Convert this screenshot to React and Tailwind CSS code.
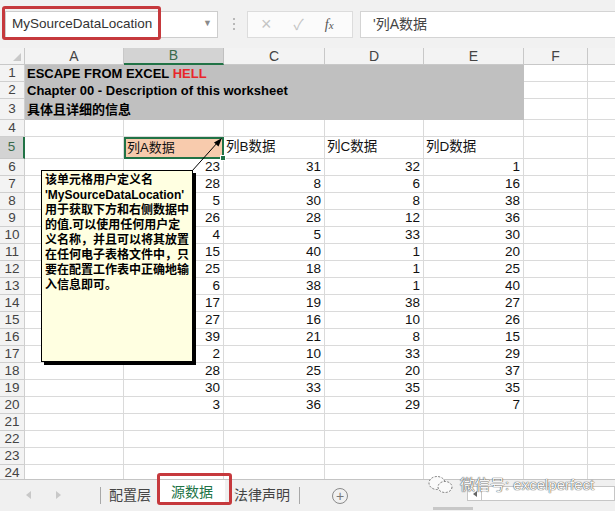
import React from "react";

const FONT = { fontFamily: '"Liberation Sans", "Noto Sans CJK SC", Arial, sans-serif' };

const data = {
  6: [23, 31, 32, 1],
  7: [28, 8, 6, 16],
  8: [5, 30, 8, 38],
  9: [26, 28, 12, 36],
  10: [4, 5, 33, 30],
  11: [15, 40, 1, 20],
  12: [25, 18, 1, 25],
  13: [6, 38, 1, 40],
  14: [17, 19, 38, 27],
  15: [27, 16, 10, 26],
  16: [39, 21, 8, 15],
  17: [2, 10, 33, 29],
  18: [28, 25, 20, 37],
  19: [30, 33, 35, 35],
  20: [3, 36, 29, 7],
};

const widths = ["w-[99px]", "w-[100px]", "w-[101px]", "w-[99px]", "w-[100px]", "w-[64px]"];

const RowHead = ({ n }) => (
  <div
    className={
      n === 5
        ? "w-[25px] shrink-0 flex items-center justify-center bg-[#d3d3d3] border-r-2 border-r-[#217346] border-b border-b-[#c8c8c8] text-[13.5px] text-[#3a6a4c]"
        : "w-[25px] shrink-0 flex items-center justify-center bg-[#f3f3f3] border-r border-b border-[#cfcfcf] text-[13.5px] text-[#444]"
    }
  >
    {n}
  </div>
);

const Cell = ({ w, children, right }) => (
  <div
    className={`${w} shrink-0 flex items-center border-r border-b border-[#dadada] text-[13.5px] text-[#111] whitespace-nowrap ${
      right ? "justify-end pr-[3px]" : "pl-[2px]"
    }`}
  >
    {children}
  </div>
);

const Row = ({ n }) => {
  const h = n === 3 ? "h-[21px]" : n === 5 ? "h-[22px]" : "h-[17px]";
  if (n <= 3) {
    const titles = {
      1: (
        <span>
          ESCAPE FROM EXCEL <span className="text-[#e8262a]">HELL</span>
        </span>
      ),
      2: "Chapter 00 - Description of this worksheet",
      3: "具体且详细的信息",
    };
    return (
      <div className={`flex ${h}`}>
        <RowHead n={n} />
        <div className="w-[499px] shrink-0 flex items-center pl-[2px] bg-[#c0c0c0] text-[13px] font-bold text-black whitespace-pre">
          {titles[n]}
        </div>
        <Cell w="w-[64px]" />
        <div className="flex-1 border-b border-[#dadada]" />
      </div>
    );
  }
  if (n === 5) {
    return (
      <div className={`flex ${h}`}>
        <RowHead n={n} />
        <Cell w={widths[0]} />
        <div className="w-[100px] shrink-0 relative bg-[#f8cbad] border-2 border-[#217346] flex items-center pl-[1px] text-[13px] text-[#111]">
          列A数据
          <div className="absolute right-[-4px] bottom-[-4px] w-[6px] h-[6px] bg-[#217346] border border-white" />
        </div>
        <Cell w={widths[2]}>列B数据</Cell>
        <Cell w={widths[3]}>列C数据</Cell>
        <Cell w={widths[4]}>列D数据</Cell>
        <Cell w={widths[5]} />
        <div className="flex-1 border-b border-[#dadada]" />
      </div>
    );
  }
  const vals = data[n] || [];
  return (
    <div className={`flex ${h}`}>
      <RowHead n={n} />
      <Cell w={widths[0]} />
      {[0, 1, 2, 3].map((i) => (
        <Cell key={i} w={widths[i + 1]} right>
          {vals[i]}
        </Cell>
      ))}
      <Cell w={widths[5]} />
      <div className="flex-1 border-b border-[#dadada]" />
    </div>
  );
};

const HeaderRow = () => {
  const cols = ["A", "B", "C", "D", "E", "F"];
  return (
    <div className="flex h-[17px]">
      <div className="w-[25px] shrink-0 relative bg-[#f3f3f3] border-r border-b border-[#c8c8c8]">
        <div className="absolute right-[3px] bottom-[3px] w-0 h-0 border-l-[8px] border-l-transparent border-b-[8px] border-b-[#c9c9c9]" />
      </div>
      {cols.map((c, i) =>
        c === "B" ? (
          <div
            key={c}
            className={`${widths[i]} shrink-0 flex items-center justify-center bg-[#d3d3d3] border-r border-[#c0c0c0] border-b-2 border-b-[#217346] text-[14px] text-[#3a6a4c]`}
          >
            {c}
          </div>
        ) : (
          <div
            key={c}
            className={`${widths[i]} shrink-0 flex items-center justify-center bg-[#f3f3f3] border-r border-b border-[#c8c8c8] text-[14px] text-[#444]`}
          >
            {c}
          </div>
        )
      )}
      <div className="flex-1 bg-[#f3f3f3] border-b border-[#c8c8c8]" />
    </div>
  );
};

const comment = [
  "该单元格用户定义名",
  "'MySourceDataLocation'",
  "用于获取下方和右侧数据中",
  "的值.可以使用任何用户定",
  "义名称，并且可以将其放置",
  "在任何电子表格文件中，只",
  "要在配置工作表中正确地输",
  "入信息即可。",
];

export default function App() {
  const rows = [];
  for (let i = 1; i <= 24; i++) rows.push(i);

  return (
    <div className="w-[615px] h-[511px] overflow-hidden bg-white relative" style={FONT}>
      {/* formula bar */}
      <div className="h-[48px] flex items-center bg-[#f1f1f1] relative">
        <div className="ml-[5px] w-[213px] h-[27px] bg-white border border-[#cdcdcd] flex items-center justify-between pl-[6px] pr-[5px]">
          <span className="text-[13.5px] text-[#333]">MySourceDataLocation</span>
          <span className="text-[9px] text-[#8a8a8a]">▼</span>
        </div>
        <div className="ml-[15px] flex flex-col gap-[3px]">
          <div className="w-[2px] h-[2px] bg-[#b8b8b8]" />
          <div className="w-[2px] h-[2px] bg-[#b8b8b8]" />
          <div className="w-[2px] h-[2px] bg-[#b8b8b8]" />
        </div>
        <div className="ml-[12px] w-[106px] h-[27px] bg-[#fbfbfb] border border-[#dcdcdc] flex items-center">
          <span className="ml-[13px] text-[18px] text-[#c4c4c4] leading-none">×</span>
          <span className="ml-[22px] text-[15px] text-[#c4c4c4] leading-none">✓</span>
          <span
            className="ml-[21px] text-[14px] italic text-[#555]"
            style={{ fontFamily: '"Liberation Serif", serif' }}
          >
            f<span className="text-[11px]">x</span>
          </span>
        </div>
        <div className="ml-[7px] flex-1 h-[27px] bg-white border border-[#d4d4d4] border-r-0 flex items-center pl-[12px] text-[14px] text-[#444]">
          '列A数据
        </div>
        {/* red annotation */}
        <div className="absolute left-[2px] top-[6px] w-[159px] h-[34px] border-[3px] border-[#c6393d] rounded-[3px]" />
      </div>

      {/* sheet */}
      <div className="relative h-[431px] overflow-hidden">
        <HeaderRow />
        {rows.map((n) => (
          <Row key={n} n={n} />
        ))}

        {/* comment */}
        <svg className="absolute left-0 top-0 pointer-events-none" width="615" height="431">
          <line x1="192" y1="123" x2="218" y2="94" stroke="#000" strokeWidth="1" />
          <polygon points="222,90 218.5,98.5 214,94.5" fill="#000" />
        </svg>
        <div className="absolute left-[41px] top-[122px] w-[152px] h-[192px] bg-[#ffffe1] border border-black shadow-[3px_3px_0_#000] pl-[3px] pt-[2px]">
          {comment.map((l, i) => (
            <div
              key={i}
              className="text-[12px] leading-[15px] font-bold text-black whitespace-nowrap"
            >
              {l}
            </div>
          ))}
        </div>
      </div>

      {/* sheet tabs */}
      <div className="h-[32px] bg-[#f0f0f0] border-t border-[#c4c4c4] flex items-center relative">
        <div className="w-[100px] h-full relative">
          <div className="absolute left-[26px] top-[11px] w-0 h-0 border-y-[4px] border-y-transparent border-r-[5px] border-r-[#c8c8c8]" />
          <div className="absolute left-[56px] top-[11px] w-0 h-0 border-y-[4px] border-y-transparent border-l-[5px] border-l-[#c8c8c8]" />
        </div>
        <div className="w-px h-[17px] bg-[#a8a8a8]" />
        <div className="w-[58px] text-center text-[14px] text-[#444]">配置层</div>
        <div className="w-[66px] h-[25px] -mt-[6px] bg-white flex items-center justify-center text-[14px] text-[#217346]">
          源数据
        </div>
        <div className="w-[74px] text-center text-[14px] text-[#444]">法律声明</div>
        <div className="w-px h-[17px] bg-[#a8a8a8]" />
        <div className="ml-[32px] w-[16px] h-[16px] rounded-full border border-[#8a8a8a] flex items-center justify-center text-[14px] leading-none text-[#777]">
          +
        </div>
        <div className="absolute left-[467px] top-[6px] w-[148px] h-[15px] bg-white border border-[#c6c6c6] flex">
          <div className="w-[14px] h-full border-r border-[#c6c6c6] flex items-center justify-center">
            <div className="w-0 h-0 border-y-[3px] border-y-transparent border-r-[4px] border-r-[#666]" />
          </div>
        </div>
        <div className="absolute left-[433px] bottom-[1px] w-[40px] h-[3px] bg-[#c8c8c8]" />
        {/* red annotation */}
        <div className="absolute left-[157px] top-[-7px] w-[75px] h-[32px] border-[3px] border-[#c6393d] rounded-[3px]" />
        {/* watermark */}
        <div className="absolute left-[428px] top-[-6px] flex items-center gap-[6px]">
          <svg width="26" height="20" viewBox="0 0 26 20">
            <ellipse cx="9" cy="8" rx="8" ry="6.5" fill="#fafafa" stroke="#777" strokeWidth="1" strokeDasharray="2 1.5" />
            <ellipse cx="17" cy="12" rx="7" ry="5.5" fill="#fafafa" stroke="#777" strokeWidth="1" strokeDasharray="2 1.5" />
          </svg>
          <span className="text-[15px] text-[#f6f6f6] whitespace-nowrap [text-shadow:0_0_1px_#444,0_0_1px_#444]">
            微信号: excelperfect
          </span>
        </div>
      </div>
    </div>
  );
}
